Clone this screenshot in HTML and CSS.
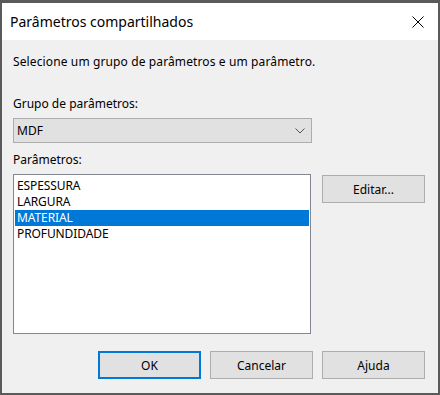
FILE: index.html
```html
<!DOCTYPE html>
<html lang="pt">
<head>
<meta charset="utf-8">
<title>Parâmetros compartilhados</title>
<link rel="stylesheet" href="styles.css">
</head>
<body>
<div class="window">
  <div class="titlebar">
    <span class="title">Parâmetros compartilhados</span>
    <svg class="close" width="12" height="12" viewBox="0 0 12 12"><path d="M0.5 0.5 L11.5 11.5 M11.5 0.5 L0.5 11.5" stroke="#000" stroke-width="1" fill="none"/></svg>
  </div>
  <div class="content">
    <p class="intro">Selecione um grupo de parâmetros e um parâmetro.</p>
    <p class="label group-label">Grupo de parâmetros:</p>
    <div class="combo">
      <span class="combo-value">MDF</span>
      <svg class="chevron" width="10" height="6" viewBox="0 0 10 6"><path d="M0.5 0.5 L5 5 L9.5 0.5" stroke="#555" stroke-width="1" fill="none"/></svg>
    </div>
    <p class="label params-label">Parâmetros:</p>
    <div class="row">
      <div class="listbox">
        <div class="item">ESPESSURA</div>
        <div class="item">LARGURA</div>
        <div class="item selected">MATERIAL</div>
        <div class="item">PROFUNDIDADE</div>
      </div>
      <button class="btn edit">Editar...</button>
    </div>
    <div class="actions">
      <button class="btn default">OK</button>
      <button class="btn">Cancelar</button>
      <button class="btn">Ajuda</button>
    </div>
  </div>
</div>
</body>
</html>
```
FILE: styles.css
```css
html, body {
  margin: 0;
  padding: 0;
  background: #f0f0f0;
}
body {
  font-family: "Noto Sans", "Open Sans", sans-serif;
  font-size: 12px;
  color: #000;
}
.window {
  box-sizing: border-box;
  width: 440px;
  height: 395px;
  border: 2px solid #5a5a5a;
  border-top-width: 3px;
  background: #f0f0f0;
  display: flex;
  flex-direction: column;
}
.titlebar {
  height: 37px;
  background: #fff;
  display: flex;
  align-items: center;
  justify-content: space-between;
  padding: 0 14px 0 8px;
}
.title {
  font-size: 14px;
  color: #000;
  padding-bottom: 0;
}
.close {
  display: block;
}
.content {
  padding: 0 13px 0 11px;
  display: flex;
  flex-direction: column;
}
.intro, .label {
  margin: 0;
  line-height: 16px;
  height: 16px;
}
.intro {
  margin-top: 14px;
  letter-spacing: 0.12px;
}
.group-label {
  margin-top: 26px;
}
.combo {
  box-sizing: border-box;
  margin-top: 6px;
  width: 299px;
  height: 25px;
  background: #e1e1e1;
  border: 1px solid #adadad;
  display: flex;
  align-items: center;
  justify-content: space-between;
  padding: 0 6px 0 3px;
}
.chevron {
  display: block;
}
.params-label {
  margin-top: 9px;
}
.row {
  margin-top: 6px;
  display: flex;
  align-items: flex-start;
  gap: 11px;
}
.listbox {
  box-sizing: border-box;
  width: 298px;
  height: 160px;
  background: #fff;
  border: 1px solid #828790;
  padding: 3px 1px;
}
.item {
  height: 16px;
  line-height: 16px;
  padding-left: 2px;
  letter-spacing: -0.1px;
}
.item.selected {
  background: #0078d7;
  color: #fff;
}
.btn {
  box-sizing: border-box;
  width: 103px;
  height: 28px;
  background: #e1e1e1;
  border: 1px solid #adadad;
  font-family: inherit;
  font-size: 12px;
  color: #000;
  padding: 0;
  margin: 0;
}
.edit {
  margin-top: 1px;
}
.actions {
  margin-top: 17px;
  display: flex;
  justify-content: flex-end;
  gap: 9px;
}
.btn.default {
  border: 2px solid #0078d7;
}
```
